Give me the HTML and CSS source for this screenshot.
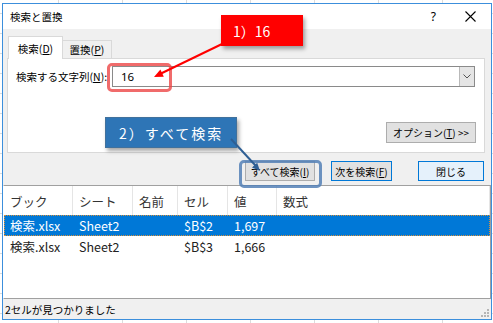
FILE: index.html
```html
<!DOCTYPE html>
<html>
<head>
    <meta charset="utf-8">
    <title>検索と置換</title>
    <link rel="stylesheet" href="styles.css">
</head>
<body>
    <div class="window">
        <div class="titlebar">
            <span class="title">検索と置換</span>
            <span class="title-help">?</span>
            <svg class="title-close" width="11" height="11" viewBox="0 0 11 11">
                <path d="M0.5 0.5 L10.5 10.5 M10.5 0.5 L0.5 10.5" stroke="#000" stroke-width="1.1" fill="none"/>
            </svg>
        </div>

        <div class="tabs">
            <div class="tab active">検索(<u>D</u>)</div>
            <div class="tab">置換(<u>P</u>)</div>
        </div>
        <div class="panel">
            <div class="search-row">
                <label for="what">検索する文字列(<u>N</u>):</label>
                <div class="combo">
                    <span class="combo-value" id="what">16</span>
                    <span class="combo-drop">
                        <svg width="8" height="5" viewBox="0 0 8 5"><path d="M0.5 0.5 L4 4 L7.5 0.5" stroke="#555" fill="none"/></svg>
                    </span>
                </div>
            </div>
            <button class="btn options">オプション(<u>T</u>) &gt;&gt;</button>
        </div>

        <div class="actions">
            <button class="btn find-all">すべて検索(<u>I</u>)</button>
            <button class="btn find-next">次を検索(<u>F</u>)</button>
            <button class="btn close">閉じる</button>
        </div>

        <div class="results">
            <div class="results-head">
                <span>ブック</span><span>シート</span><span>名前</span><span>セル</span><span>値</span><span>数式</span>
            </div>
            <div class="results-row selected">
                <span>検索.xlsx</span><span>Sheet2</span><span></span><span>$B$2</span><span>1,697</span><span></span>
            </div>
            <div class="results-row">
                <span>検索.xlsx</span><span>Sheet2</span><span></span><span>$B$3</span><span>1,666</span><span></span>
            </div>
        </div>

        <div class="status">
            <span>2セルが見つかりました</span>
            <svg class="grip" width="8" height="8" viewBox="0 0 8 8" fill="#b5b5b5">
                <rect x="6" y="0" width="2" height="2"/>
                <rect x="3" y="3" width="2" height="2"/><rect x="6" y="3" width="2" height="2"/>
                <rect x="0" y="6" width="2" height="2"/><rect x="3" y="6" width="2" height="2"/><rect x="6" y="6" width="2" height="2"/>
            </svg>
        </div>
    </div>

    <!-- 説明用の注釈 -->
    <div class="ring ring-red"></div>
    <div class="ring ring-blue"></div>
    <div class="callout callout-red">1）16</div>
    <div class="callout callout-blue">2）すべて検索</div>
    <svg class="arrows" width="493" height="323" viewBox="0 0 493 323">
        <line x1="222" y1="44" x2="161" y2="73.5" stroke="#ff0000" stroke-width="2"/>
        <polygon points="154,77 163.8,76.7 160.4,69.5" fill="#ff0000"/>
        <line x1="231" y1="139" x2="255.5" y2="165.5" stroke="#2f5f94" stroke-width="2"/>
        <polygon points="260,171 252,167.4 257.2,162.8" fill="#2f5f94"/>
    </svg>
</body>
</html>
```

FILE: styles.css
```css
body {
    margin: 0;
    width: 493px;
    height: 323px;
    overflow: hidden;
    position: relative;
    background-color: #fff;
    background-image: linear-gradient(90deg, #dcdcdc 1px, transparent 1px), linear-gradient(#dcdcdc 1px, transparent 1px);
    background-size: 64px 20px;
    background-position: 58px 0, 0 13px;
    font-family: "Noto Sans CJK JP", "Noto Sans", sans-serif;
}
.window {
    width: 490px;
    height: 317px;
    margin: 3px 0 0 2px;
    box-sizing: border-box;
    border: 1px solid #3c8fdc;
    background-color: #f0f0f0;
    display: flex;
    flex-direction: column;
    font-size: 10.5px;
    color: #000;
}
.titlebar {
    height: 25px;
    background-color: #fff;
    display: flex;
    align-items: center;
    padding-left: 7px;
    font-size: 10.5px;
}
.title-help {
    margin-left: auto;
    font-family: "Noto Sans", sans-serif;
    font-size: 12px;
}
.title-close {
    margin: 0 15px 0 29px;
}
u {
    text-decoration: underline;
}

/* tabs */
.tabs {
    display: flex;
    align-items: flex-end;
    height: 22px;
    margin: 7px 0 0 5px;
}
.tab {
    width: 49px;
    height: 18px;
    box-sizing: border-box;
    border: 1px solid #d9d9d9;
    border-bottom: none;
    border-left: none;
    display: flex;
    align-items: center;
    justify-content: center;
}
.tab.active {
    width: 55px;
    height: 23px;
    margin-bottom: -1px;
    border-left: 1px solid #d9d9d9;
    background-color: #fff;
    position: relative;
    z-index: 1;
}
.panel {
    height: 95px;
    margin: 0 6px 0 4px;
    box-sizing: border-box;
    border: 1px solid #d9d9d9;
    background-color: #fff;
    padding: 7px 8px 0 8px;
    display: flex;
    flex-direction: column;
}
.search-row {
    display: flex;
    align-items: center;
    height: 21px;
}
.search-row label {
    width: 96px;
    flex: none;
}
.combo {
    flex: 1;
    height: 21px;
    box-sizing: border-box;
    border: 1px solid #8a8a8a;
    display: flex;
    margin-right: 1px;
}
.combo-value {
    flex: 1;
    padding-left: 8px;
    font-family: "Noto Sans", sans-serif;
    font-size: 11.5px;
    line-height: 19px;
}
.combo-drop {
    width: 14px;
    background-color: #e5e5e5;
    border-left: 1px solid #b9b9b9;
    display: flex;
    align-items: center;
    justify-content: center;
}

/* buttons */
.btn {
    height: 21px;
    box-sizing: border-box;
    border: 1px solid #adadad;
    background-color: #e1e1e1;
    font-family: inherit;
    font-size: 10px;
    color: #000;
    padding: 0;
    display: flex;
    align-items: center;
    justify-content: center;
}
.options {
    width: 90px;
    align-self: flex-end;
    margin-top: 35px;
}
.actions {
    display: flex;
    justify-content: flex-end;
    padding: 8px 7px 0 0;
}
.actions .btn {
    height: 20px;
}
.find-all {
    width: 70px;
}
.find-next {
    width: 61px;
    margin-left: 16px;
    border-color: #0078d7;
}
.close {
    width: 66px;
    margin-left: 26px;
    border-color: #0078d7;
    background-color: #e5f1fb;
}

/* results list */
.results {
    margin-top: 4px;
    height: 114px;
    box-sizing: border-box;
    border: 1px solid #a0a0a0;
    border-left-color: #fff;
    background-color: #fff;
    font-size: 12.5px;
}
.results-head,
.results-row {
    display: grid;
    grid-template-columns: 69px 60px 45px 50px 49px 1fr;
    align-items: center;
}
.results-head {
    height: 29px;
    color: #333;
}
.results-head span {
    height: 29px;
    line-height: 31px;
    border-right: 1px solid #e5e5e5;
    padding-left: 6px;
}
.results-row {
    height: 21px;
    color: #222;
}
.results-row span {
    padding-left: 6px;
    line-height: 21px;
}
.results-row.selected {
    background-color: #0078d7;
    color: #fff;
    outline: 1px dotted #d9913c;
    outline-offset: -1px;
}
.status {
    flex: 1;
    display: flex;
    align-items: center;
    padding-left: 2px;
    font-size: 10.5px;
    position: relative;
}
.grip {
    position: absolute;
    right: 2px;
    bottom: 2px;
}

/* annotations */
.ring {
    position: absolute;
    box-sizing: border-box;
    border-radius: 5px;
}
.ring-red {
    left: 107px;
    top: 63px;
    width: 65px;
    height: 29px;
    border: 3px solid rgba(236, 70, 70, 0.8);
}
.ring-blue {
    left: 239px;
    top: 160px;
    width: 83px;
    height: 28px;
    border: 3px solid rgba(84, 128, 182, 0.85);
}
.callout {
    position: absolute;
    height: 31px;
    box-sizing: border-box;
    display: flex;
    align-items: center;
    color: #fff;
    font-size: 14px;
    box-shadow: 2px 3px 4px rgba(0, 0, 0, 0.35);
}
.callout-red {
    left: 221px;
    top: 15px;
    width: 82px;
    padding-left: 12px;
    background-color: #ff0000;
}
.callout-blue {
    left: 105px;
    top: 117px;
    width: 132px;
    padding-left: 13px;
    background-color: #2e75b6;
    border: 1px solid #41719c;
    letter-spacing: 2px;
}
.arrows {
    position: absolute;
    left: 0;
    top: 0;
    pointer-events: none;
}
```
